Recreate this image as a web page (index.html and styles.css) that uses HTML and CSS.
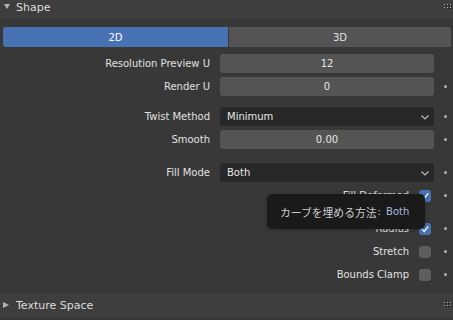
FILE: index.html
```html
<!DOCTYPE html>
<html lang="ja">
<head>
  <meta charset="UTF-8" />
  <title>Shape</title>
  <link rel="stylesheet" href="styles.css">
</head>
<body>

  <div class="panel-header top">
    <span class="arrow-down"></span>
    <span class="title">Shape</span>
    <svg class="grip" width="8" height="6" viewBox="0 0 8 6">
      <rect x="0" y="0" width="1" height="1" fill="#b0b0b0"/><rect x="3" y="0" width="1" height="1" fill="#b0b0b0"/><rect x="6" y="0" width="1" height="1" fill="#b0b0b0"/>
      <rect x="1" y="1" width="1" height="1" fill="#1e1e1e"/><rect x="4" y="1" width="1" height="1" fill="#1e1e1e"/><rect x="7" y="1" width="1" height="1" fill="#1e1e1e"/>
      <rect x="0" y="3" width="1" height="1" fill="#b0b0b0"/><rect x="3" y="3" width="1" height="1" fill="#b0b0b0"/><rect x="6" y="3" width="1" height="1" fill="#b0b0b0"/>
      <rect x="1" y="4" width="1" height="1" fill="#1e1e1e"/><rect x="4" y="4" width="1" height="1" fill="#1e1e1e"/><rect x="7" y="4" width="1" height="1" fill="#1e1e1e"/>
    </svg>
  </div>

  <div class="panel-body">
    <div class="tabs">
      <div class="tab active">2D</div>
      <div class="tab">3D</div>
    </div>

    <div class="group first">
      <div class="row">
        <div class="label">Resolution Preview U</div>
        <div class="field">12</div>
        <div class="dot-cell"></div>
      </div>
      <div class="row">
        <div class="label">Render U</div>
        <div class="field">0</div>
        <div class="dot-cell"><span class="dot"></span></div>
      </div>
    </div>

    <div class="group">
      <div class="row">
        <div class="label">Twist Method</div>
        <div class="field menu">
          <span>Minimum</span>
          <svg class="chevron" width="8" height="5" viewBox="0 0 8 5"><path d="M0.5 0.5 L4 4 L7.5 0.5" fill="none" stroke="#bdbdbd" stroke-width="1.1"/></svg>
        </div>
        <div class="dot-cell"><span class="dot"></span></div>
      </div>
      <div class="row">
        <div class="label">Smooth</div>
        <div class="field">0.00</div>
        <div class="dot-cell"><span class="dot"></span></div>
      </div>
    </div>

    <div class="group wide">
      <div class="row">
        <div class="label">Fill Mode</div>
        <div class="field menu">
          <span>Both</span>
          <svg class="chevron" width="8" height="5" viewBox="0 0 8 5"><path d="M0.5 0.5 L4 4 L7.5 0.5" fill="none" stroke="#bdbdbd" stroke-width="1.1"/></svg>
        </div>
        <div class="dot-cell"><span class="dot"></span></div>
      </div>
      <div class="row">
        <div class="label"></div>
        <div class="check">
          <span>Fill Deformed</span>
          <span class="box on"><svg width="12" height="12" viewBox="0 0 12 12"><path d="M3 6.2 L5.2 8.4 L9.2 3.4" fill="none" stroke="#fff" stroke-width="1.4"/></svg></span>
        </div>
        <div class="dot-cell"><span class="dot"></span></div>
      </div>
    </div>

    <div class="group wide">
      <div class="row">
        <div class="label"></div>
        <div class="check">
          <span>Radius</span>
          <span class="box on"><svg width="12" height="12" viewBox="0 0 12 12"><path d="M3 6.2 L5.2 8.4 L9.2 3.4" fill="none" stroke="#fff" stroke-width="1.4"/></svg></span>
        </div>
        <div class="dot-cell"><span class="dot"></span></div>
      </div>
      <div class="row">
        <div class="label"></div>
        <div class="check">
          <span>Stretch</span>
          <span class="box"></span>
        </div>
        <div class="dot-cell"><span class="dot"></span></div>
      </div>
      <div class="row">
        <div class="label"></div>
        <div class="check">
          <span>Bounds Clamp</span>
          <span class="box"></span>
        </div>
        <div class="dot-cell"><span class="dot"></span></div>
      </div>
    </div>
  </div>

  <div class="panel-header bottom">
    <span class="arrow-right"></span>
    <span class="title">Texture Space</span>
    <svg class="grip" width="8" height="6" viewBox="0 0 8 6">
      <rect x="0" y="0" width="1" height="1" fill="#b0b0b0"/><rect x="3" y="0" width="1" height="1" fill="#b0b0b0"/><rect x="6" y="0" width="1" height="1" fill="#b0b0b0"/>
      <rect x="1" y="1" width="1" height="1" fill="#1e1e1e"/><rect x="4" y="1" width="1" height="1" fill="#1e1e1e"/><rect x="7" y="1" width="1" height="1" fill="#1e1e1e"/>
      <rect x="0" y="3" width="1" height="1" fill="#b0b0b0"/><rect x="3" y="3" width="1" height="1" fill="#b0b0b0"/><rect x="6" y="3" width="1" height="1" fill="#b0b0b0"/>
      <rect x="1" y="4" width="1" height="1" fill="#1e1e1e"/><rect x="4" y="4" width="1" height="1" fill="#1e1e1e"/><rect x="7" y="4" width="1" height="1" fill="#1e1e1e"/>
    </svg>
  </div>

  <div class="tooltip">
    <span class="jp">カーブを埋める方法</span>: <span class="value">Both</span>
  </div>

</body>
</html>
```

FILE: styles.css
```css
/* Reset */
* {
  margin: 0;
  padding: 0;
  box-sizing: border-box;
}

body {
  width: 453px;
  height: 320px;
  overflow: hidden;
  position: relative;
  background: #383838;
  font-family: "DejaVu Sans", "Noto Sans CJK JP", sans-serif;
  font-size: 10px;
  color: #e0e0e0;
}

/* Panel headers */
.panel-header {
  height: 24px;
  display: flex;
  align-items: center;
  background: #3e3e3e;
  font-size: 11px;
  color: #dcdcdc;
}

.panel-header.top {
  margin-top: -5px;
}

.panel-header.bottom {
  margin-top: 7px;
}

.panel-header .title {
  flex: 1;
}

.arrow-down {
  width: 0;
  height: 0;
  margin: 0 6px 1px 4px;
  border-left: 3px solid transparent;
  border-right: 3px solid transparent;
  border-top: 5px solid #b4b4b4;
}

.arrow-right {
  width: 0;
  height: 0;
  margin: 0 7px 0 3px;
  border-top: 3px solid transparent;
  border-bottom: 3px solid transparent;
  border-left: 6px solid #b4b4b4;
}

.grip {
  margin-right: 1px;
}

/* Body */
.panel-body {
  padding-top: 8px;
}

.tabs {
  display: flex;
  gap: 1px;
  height: 20px;
  margin: 0 2px 0 3px;
}

.tab {
  flex: 1;
  display: flex;
  align-items: center;
  justify-content: center;
  background: #545454;
  color: #e0e0e0;
}

.tab:first-child {
  flex: 0 0 225px;
  border-radius: 3px 0 0 3px;
}

.tab:last-child {
  border-radius: 0 3px 3px 0;
}

.tab.active {
  background: #4772b3;
  color: #ffffff;
}

.group {
  margin-top: 7px;
}

.group.first {
  margin-top: 5px;
}

.group.wide {
  margin-top: 10px;
}

.row {
  display: flex;
  align-items: center;
  height: 23px;
}

.label {
  width: 210px;
  margin-right: 10px;
  text-align: right;
  white-space: nowrap;
}

.field {
  width: 214px;
  height: 19px;
  border-radius: 3px;
  background: #545454;
  display: flex;
  align-items: center;
  justify-content: center;
  color: #e6e6e6;
}

.field.menu {
  background: #282828;
  justify-content: space-between;
  padding: 0 5px 0 7px;
}

.chevron {
  margin-top: 1px;
}

.dot-cell {
  width: 19px;
  display: flex;
  align-items: center;
  padding-left: 10px;
}

.dot {
  width: 3px;
  height: 3px;
  border-radius: 50%;
  background: #b0b0b0;
}

/* Checkboxes */
.check {
  width: 214px;
  display: flex;
  align-items: center;
  justify-content: flex-end;
  padding-right: 3px;
  gap: 10px;
}

.box {
  width: 12px;
  height: 12px;
  border-radius: 3px;
  background: #5e5e5e;
  display: flex;
}

.box.on {
  background: #4772b3;
}

/* Tooltip */
.tooltip {
  position: absolute;
  left: 267px;
  top: 194px;
  width: 158px;
  height: 35px;
  padding-left: 13px;
  display: flex;
  align-items: center;
  border-radius: 5px;
  background: #1a1a1a;
  color: #cccccc;
  white-space: pre;
  box-shadow: 0 1px 4px rgba(0, 0, 0, 0.25);
}

.tooltip .jp {
  font-family: "Noto Sans CJK JP", sans-serif;
  font-size: 10.8px;
  margin-right: 1px;
}

.tooltip .value {
  margin-left: 2px;
  color: #a5b8da;
}
```
